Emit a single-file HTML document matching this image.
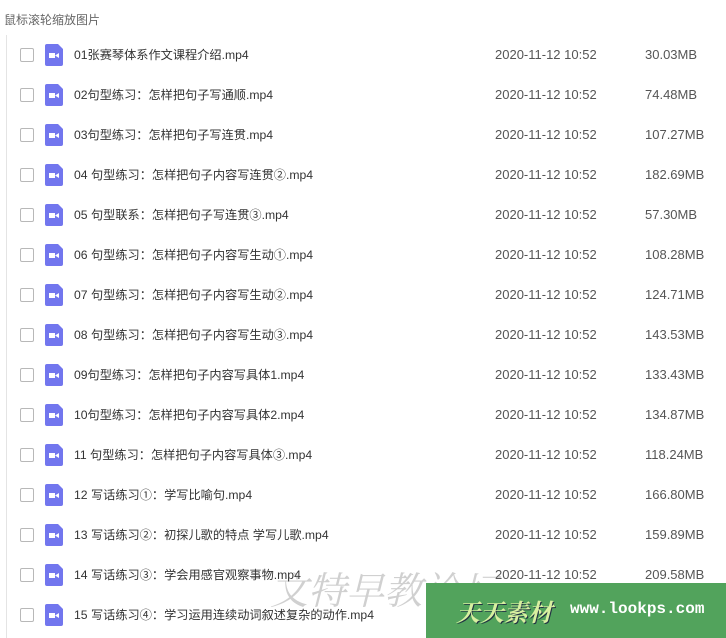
<!DOCTYPE html>
<html><head><meta charset="utf-8"><style>
body{margin:0;width:726px;height:638px;background:#fff;overflow:hidden;position:relative;font-family:"Liberation Sans","Noto Sans CJK SC",sans-serif;}
.t{position:absolute;left:4px;top:11px;font-size:12px;color:#666;}
.vl{position:absolute;left:6px;top:35px;width:1px;height:603px;background:#e4e4e4;}
.r{position:absolute;left:0;width:726px;height:40px;font-size:13px;color:#333;line-height:16px;}
.cb{position:absolute;left:20px;top:13px;width:12px;height:12px;border:1px solid #b8b8b8;border-radius:2px;background:#fff;}
.ic{position:absolute;left:45px;top:9px;}
.n{position:absolute;left:74px;top:12px;white-space:nowrap;font-size:12.2px;}
.d{position:absolute;left:495px;top:12px;color:#555;}
.s{position:absolute;left:645px;top:12px;color:#555;}
.g{position:absolute;left:426px;top:583px;width:300px;height:55px;background:#52a35c;}
.g1{position:absolute;left:30px;top:10px;font-size:24px;font-weight:bold;font-style:italic;color:#d8f0a0;font-family:"Noto Serif CJK SC",serif;text-shadow:1px 1px 0 #234;}
.g2{position:absolute;left:144px;top:17px;font-size:16px;font-weight:bold;color:#fff;font-family:"Liberation Mono",monospace;}
.wm{position:absolute;left:270px;top:560px;font-size:38px;color:rgba(120,120,120,.35);font-family:"Noto Serif CJK SC",serif;font-style:italic;}
</style></head><body>
<div class="t">鼠标滚轮缩放图片</div>
<div class="vl"></div>
<div id="list"></div>
<div class="wm">文特早教论坛</div>
<div class="g"><div class="g1">天天素材</div><div class="g2">www.lookps.com</div></div>
<script>
var rows=[["01张赛琴体系作文课程介绍.mp4","30.03MB"],["02句型练习：怎样把句子写通顺.mp4","74.48MB"],["03句型练习：怎样把句子写连贯.mp4","107.27MB"],["04 句型练习：怎样把句子内容写连贯②.mp4","182.69MB"],["05 句型联系：怎样把句子写连贯③.mp4","57.30MB"],["06 句型练习：怎样把句子内容写生动①.mp4","108.28MB"],["07 句型练习：怎样把句子内容写生动②.mp4","124.71MB"],["08 句型练习：怎样把句子内容写生动③.mp4","143.53MB"],["09句型练习：怎样把句子内容写具体1.mp4","133.43MB"],["10句型练习：怎样把句子内容写具体2.mp4","134.87MB"],["11 句型练习：怎样把句子内容写具体③.mp4","118.24MB"],["12 写话练习①：学写比喻句.mp4","166.80MB"],["13 写话练习②：初探儿歌的特点 学写儿歌.mp4","159.89MB"],["14 写话练习③：学会用感官观察事物.mp4","209.58MB"],["15 写话练习④：学习运用连续动词叙述复杂的动作.mp4",""]];
var h="";rows.forEach(function(r,i){h+='<div class="r" style="top:'+(35+i*40)+'px"><div class="cb"></div><svg class="ic" width="18" height="22" viewBox="0 0 18 22"><path d="M2 0H13L18 5V20a2 2 0 0 1-2 2H2a2 2 0 0 1-2-2V2a2 2 0 0 1 2-2z" fill="#7276ee"/><rect x="4" y="9" width="6" height="5" fill="#fff"/><path d="M10 11.5L14 9V14z" fill="#fff"/></svg><div class="n">'+r[0]+'</div><div class="d">2020-11-12 10:52</div><div class="s">'+r[1]+'</div></div>';});
document.getElementById("list").innerHTML=h;
</script>
</body></html>
